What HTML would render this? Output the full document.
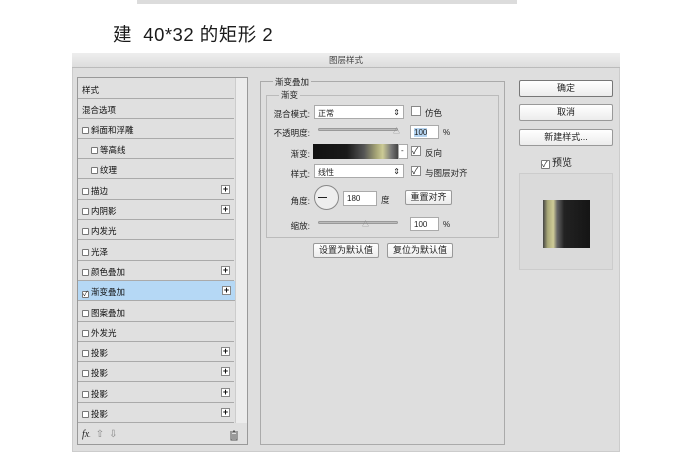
<!DOCTYPE html>
<html><head><meta charset="utf-8"><style>
*{margin:0;padding:0;box-sizing:border-box}
body{width:690px;height:456px;background:#fff;position:relative;overflow:hidden;font-family:"Liberation Sans","Noto Sans CJK SC",sans-serif;font-size:9px;color:#222}
.a{position:absolute}
.row{position:absolute;left:78px;width:156px;height:20px;border-bottom:1px solid #aaa;background:#e0e0e0;padding:5px 0 0 4px;font-size:8.5px;color:#111}
.cb{display:inline-block;width:7px;height:7px;border:1px solid #777;background:#fff;margin-right:2px;vertical-align:-1px;border-radius:1px}
.plus{position:absolute;right:4px;top:5px;width:9px;height:9px;border:1px solid #888;background:#fff;font-size:9px;line-height:7px;text-align:center;font-weight:bold}
.btn{position:absolute;background:linear-gradient(#fff,#ececec);border:1px solid #999;border-radius:2px;text-align:center;font-size:9px}
.inp{position:absolute;background:#fff;border:1px solid #aaa;font-size:8px;padding:2px 3px}
.lbl{position:absolute;font-size:8.5px;text-align:right}
.sl{position:absolute;height:3px;background:#bbb;border:1px solid #999;border-radius:2px}
</style></head><body>
<div class="a" style="left:137px;top:0;width:380px;height:4px;background:#dcdcdc"></div>
<div class="a" style="left:113px;top:21px;font-size:18.5px;color:#1a1a1a;letter-spacing:0.5px">建&nbsp;&nbsp;40*32 的矩形 2</div>
<div class="a" style="left:72px;top:53px;width:548px;height:399px;background:#dedede;border:1px solid #ccc"></div>
<div class="a" style="left:72px;top:53px;width:548px;height:15px;background:linear-gradient(#eee,#ddd);border-bottom:1px solid #bbb;text-align:center;font-size:8.5px;line-height:15px;color:#444">图层样式</div>
<div class="a" style="left:77px;top:77px;width:171px;height:368px;border:1px solid #999;background:#e0e0e0"></div>
<div class="a" style="left:235px;top:78px;width:12px;height:345px;background:#ececec;border-left:1px solid #ccc"></div>
<div class="row" style="top:79px">样式</div>
<div class="row" style="top:99px">混合选项</div>
<div class="row" style="top:119px"><span class="cb"></span>斜面和浮雕</div>
<div class="row" style="top:139px;padding-left:13px"><span class="cb"></span>等高线</div>
<div class="row" style="top:159px;padding-left:13px"><span class="cb"></span>纹理</div>
<div class="row" style="top:180px"><span class="cb"></span>描边<span class="plus">+</span></div>
<div class="row" style="top:200px"><span class="cb"></span>内阴影<span class="plus">+</span></div>
<div class="row" style="top:220px"><span class="cb"></span>内发光</div>
<div class="row" style="top:241px"><span class="cb"></span>光泽</div>
<div class="row" style="top:261px"><span class="cb"></span>颜色叠加<span class="plus">+</span></div>
<div class="row" style="top:281px;background:#b5d8f5;width:157px"><span class="cb" style="font-size:7px;line-height:5px">✓</span>渐变叠加<span class="plus">+</span></div>
<div class="row" style="top:302px"><span class="cb"></span>图案叠加</div>
<div class="row" style="top:322px"><span class="cb"></span>外发光</div>
<div class="row" style="top:342px"><span class="cb"></span>投影<span class="plus">+</span></div>
<div class="row" style="top:362px"><span class="cb"></span>投影<span class="plus">+</span></div>
<div class="row" style="top:383px"><span class="cb"></span>投影<span class="plus">+</span></div>
<div class="row" style="top:403px"><span class="cb"></span>投影<span class="plus">+</span></div>
<div class="a" style="left:82px;top:429px;font-family:'Liberation Serif',serif;font-style:italic;font-size:10px">fx<span style="font-size:6px">.</span>&nbsp;&nbsp;<span style="color:#888;font-style:normal">⇧&nbsp;&nbsp;⇩</span></div>
<svg class="a" style="left:229px;top:430px" width="10" height="11" viewBox="0 0 10 11"><path d="M1 2h8M4 1h2M2 3v7h6V3M4 4v5M6 4v5" stroke="#555" fill="none"/></svg>
<!-- center -->
<div class="a" style="left:260px;top:81px;width:245px;height:364px;border:1px solid #aaa"></div>
<div class="a" style="left:273px;top:76px;background:#dedede;padding:0 2px;font-size:8.5px">渐变叠加</div>
<div class="a" style="left:266px;top:95px;width:233px;height:143px;border:1px solid #bbb"></div>
<div class="a" style="left:279px;top:89px;background:#dedede;padding:0 2px;font-size:8.5px">渐变</div>
<div class="lbl" style="left:270px;top:108px;width:40px">混合模式:</div>
<div class="inp" style="left:314px;top:105px;width:90px;height:14px">正常<span style="float:right">⇕</span></div>
<div class="a" style="left:411px;top:106px;width:10px;height:10px;border:1px solid #888;background:#fff"></div>
<div class="a" style="left:425px;top:107px;font-size:8.5px">仿色</div>
<div class="lbl" style="left:270px;top:127px;width:40px">不透明度:</div>
<div class="sl" style="left:318px;top:128px;width:80px"></div>
<div class="a" style="left:393px;top:126px;font-size:7px;color:#888">△</div>
<div class="inp" style="left:410px;top:125px;width:29px;height:14px"><span style="background:#b5d4f0">100</span></div>
<div class="a" style="left:443px;top:128px;font-size:8px">%</div>
<div class="lbl" style="left:270px;top:148px;width:40px">渐变:</div>
<div class="a" style="left:313px;top:144px;width:85px;height:15px;background:linear-gradient(90deg,#111 0%,#1a1a1a 40%,#555 60%,#a9a878 75%,#cccb95 82%,#777 92%,#444 100%)"></div>
<div class="inp" style="left:398px;top:144px;width:10px;height:15px;padding:1px 2px">-</div>
<div class="a" style="left:411px;top:146px;width:10px;height:10px;border:1px solid #888;background:#fff;font-size:9px;line-height:8px">✓</div>
<div class="a" style="left:425px;top:147px;font-size:8.5px">反向</div>
<div class="lbl" style="left:270px;top:168px;width:40px">样式:</div>
<div class="inp" style="left:314px;top:164px;width:90px;height:14px">线性<span style="float:right">⇕</span></div>
<div class="a" style="left:411px;top:166px;width:10px;height:10px;border:1px solid #888;background:#fff;font-size:9px;line-height:8px">✓</div>
<div class="a" style="left:425px;top:167px;font-size:8.5px">与图层对齐</div>
<div class="lbl" style="left:270px;top:195px;width:40px">角度:</div>
<div class="a" style="left:314px;top:185px;width:25px;height:25px;border:1px solid #888;border-radius:50%;background:#eee"></div>
<div class="a" style="left:318px;top:197px;width:9px;height:1px;background:#222"></div>
<div class="inp" style="left:343px;top:191px;width:34px;height:15px">180</div>
<div class="a" style="left:381px;top:194px;font-size:8.5px">度</div>
<div class="btn" style="left:405px;top:190px;width:47px;height:15px;line-height:13px">重置对齐</div>
<div class="lbl" style="left:270px;top:220px;width:40px">缩放:</div>
<div class="sl" style="left:318px;top:221px;width:80px"></div>
<div class="a" style="left:362px;top:219px;font-size:7px;color:#888">△</div>
<div class="inp" style="left:410px;top:217px;width:29px;height:14px">100</div>
<div class="a" style="left:443px;top:220px;font-size:8px">%</div>
<div class="btn" style="left:313px;top:243px;width:66px;height:15px;line-height:13px">设置为默认值</div>
<div class="btn" style="left:387px;top:243px;width:66px;height:15px;line-height:13px">复位为默认值</div>
<!-- right -->
<div class="btn" style="left:519px;top:80px;width:94px;height:17px;line-height:15px;border-color:#777">确定</div>
<div class="btn" style="left:519px;top:104px;width:94px;height:17px;line-height:15px">取消</div>
<div class="btn" style="left:519px;top:129px;width:94px;height:17px;line-height:15px">新建样式...</div>
<div class="a" style="left:541px;top:154px;font-size:10px"><span class="cb" style="width:9px;height:9px;font-size:8px;line-height:7px">✓</span>预览</div>
<div class="a" style="left:519px;top:173px;width:94px;height:97px;border:1px solid #ccc;background:#dadada"></div>
<div class="a" style="left:543px;top:200px;width:47px;height:48px;background:linear-gradient(90deg,#444 0%,#a9a878 10%,#cfcc98 22%,#666 30%,#222 45%,#151515 100%)"></div>
</body></html>
